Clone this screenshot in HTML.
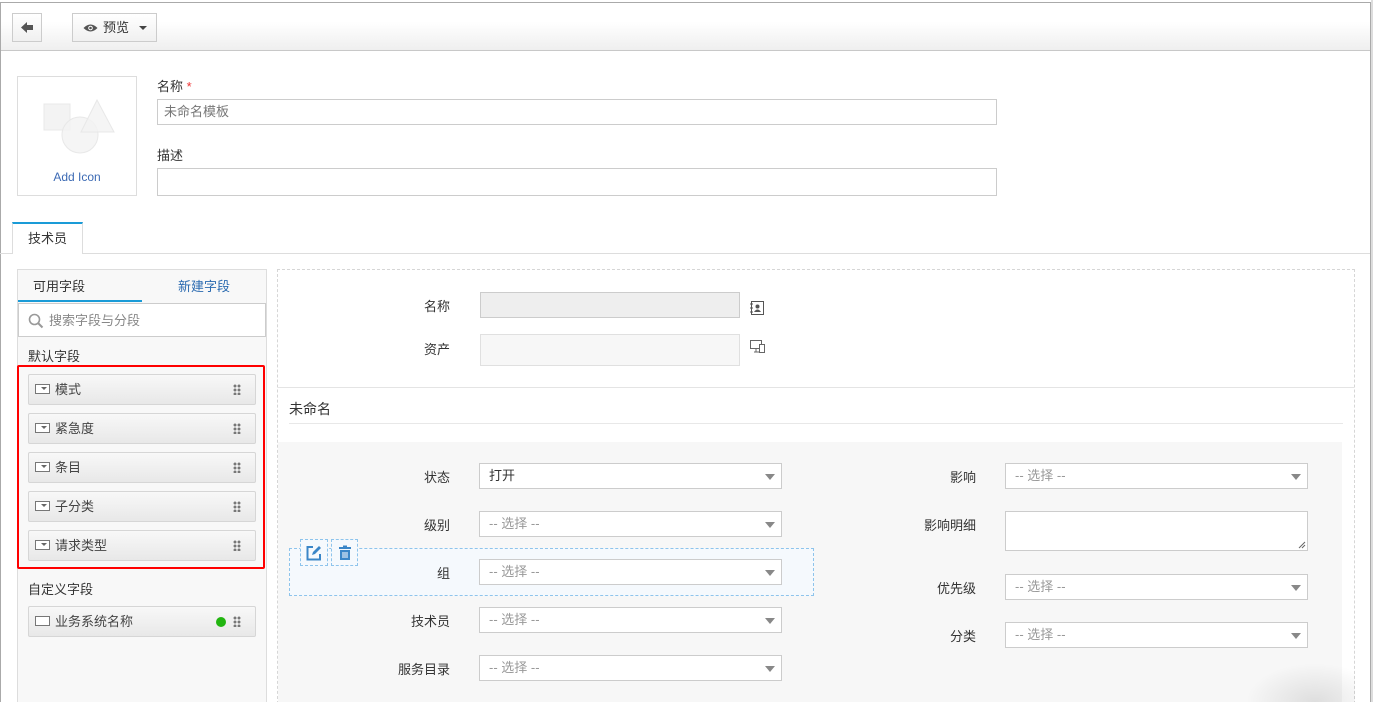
<!DOCTYPE html>
<html><head><meta charset="utf-8"><style>
*{box-sizing:border-box;margin:0;padding:0}
html,body{width:1373px;height:702px;overflow:hidden}
body{background:#fff;font-family:"Liberation Sans","Noto Sans CJK SC",sans-serif;font-size:13px;color:#333;position:relative}
.a{position:absolute}
.frame{left:0;top:2px;width:1371px;height:700px;border:1px solid #aaa;border-bottom:none}
.rgt{left:1371px;top:0;width:2px;height:702px;background:#ddd}
.tb{left:1px;top:3px;width:1369px;height:48px;background:linear-gradient(#fff 0%,#fff 40%,#efefef 100%);border-bottom:1px solid #c8c8c8}
.btn{border:1px solid #ccc;background:linear-gradient(#fff,#f0f0f0);height:29px}
.inp{border:1px solid #ccc;background:#fff}
.lbl{text-align:right;width:120px;font-size:13px}
.sel{border:1px solid #ccc;background:#fff;height:26px;width:303px;color:#999;padding-left:9px;line-height:24px;font-size:13px}
.sel:after{content:"";position:absolute;right:6px;top:10px;border:5px solid transparent;border-top:6px solid #888;border-bottom:0}
.item{left:28px;width:228px;height:31px;border:1px solid #d6d6d6;border-radius:2px;background:linear-gradient(#f8f8f8,#e8e8e8);line-height:29px;padding-left:26px;color:#444}
.item .ic{position:absolute;left:6px;top:9px;width:15px;height:10px;border:1.5px solid #777;background:#fff}
.item .ic.arr:after{content:"";position:absolute;left:5px;top:2px;border:3px solid transparent;border-top:3px solid #666;border-bottom:0}
.item .dr{position:absolute;right:14px;top:9px;width:8px;height:11px;background:radial-gradient(circle,#777 1.3px,transparent 1.6px) 0 0/4px 4px}
</style></head><body>
<div class="a frame"></div>
<div class="a rgt"></div>
<div class="a tb"></div>
<div class="a btn" style="left:12px;top:13px;width:30px"><svg width="28" height="27" viewBox="0 0 28 27"><path d="M8 13.5 L14 8 L14 11 L20 11 L20 16 L14 16 L14 19 Z" fill="#555"/></svg></div>
<div class="a btn" style="left:72px;top:13px;width:85px;line-height:27px;padding-left:30px;font-size:13px">预览
<svg class="a" style="left:10px;top:9px" width="15" height="10" viewBox="0 0 15 10"><path d="M0.5 5 Q7.5 -2 14.5 5 Q7.5 12 0.5 5Z" fill="#555"/><circle cx="7.5" cy="5" r="2.3" fill="#fff"/><circle cx="7.5" cy="5" r="1.3" fill="#555"/></svg>
<span class="a" style="left:66px;top:12px;border:4px solid transparent;border-top:4px solid #444;border-bottom:0"></span></div>

<div class="a" style="left:17px;top:76px;width:120px;height:120px;border:1px solid #ddd">
<svg class="a" style="left:25px;top:22px" width="72" height="56" viewBox="0 0 72 56"><rect x="1" y="5" width="26" height="26" fill="#f3f3f3" stroke="#e8e8e8"/><circle cx="37" cy="36" r="18" fill="#f3f3f3" stroke="#e8e8e8" fill-opacity=".8"/><path d="M54 1 L71 33 L38 33Z" fill="#f3f3f3" stroke="#e8e8e8" fill-opacity=".8"/></svg>
<div class="a" style="left:0;top:93px;width:118px;text-align:center;color:#3c6ab4;font-size:12px">Add Icon</div></div>
<div class="a" style="left:157px;top:76px">名称 <span style="color:#e33">*</span></div>
<div class="a inp" style="left:157px;top:99px;width:840px;height:26px;color:#777;padding-left:6px;line-height:24px">未命名模板</div>
<div class="a" style="left:157px;top:145px">描述</div>
<div class="a inp" style="left:157px;top:168px;width:840px;height:28px"></div>

<div class="a" style="left:0;top:253px;width:1370px;height:1px;background:#ddd"></div>
<div class="a" style="left:12px;top:222px;width:71px;height:32px;border:1px solid #ddd;border-top:2px solid #1a9bd7;border-bottom:none;background:#fff;text-align:center;line-height:30px">技术员</div>

<div class="a" style="left:17px;top:269px;width:250px;height:440px;background:#f8f8f8;border:1px solid #ddd"></div>
<div class="a" style="left:33px;top:276px">可用字段</div>
<div class="a" style="left:178px;top:276px;color:#2a6ab0">新建字段</div>
<div class="a" style="left:18px;top:300px;width:124px;height:2px;background:#1a9bd7"></div>
<div class="a inp" style="left:18px;top:303px;width:248px;height:34px;color:#888;padding-left:30px;line-height:33px">搜索字段与分段
<svg class="a" style="left:9px;top:9px" width="16" height="16" viewBox="0 0 16 16"><circle cx="6.5" cy="6.5" r="5" fill="none" stroke="#999" stroke-width="1.6"/><path d="M10 10 L14.5 14.5" stroke="#999" stroke-width="2"/></svg></div>
<div class="a" style="left:28px;top:346px">默认字段</div>
<div class="a" style="left:17px;top:365px;width:248px;height:204px;border:2px solid #f00;border-radius:2px"></div>
<div class="a item" style="top:374px"><i class="ic arr"></i>模式<i class="dr"></i></div>
<div class="a item" style="top:413px"><i class="ic arr"></i>紧急度<i class="dr"></i></div>
<div class="a item" style="top:452px"><i class="ic arr"></i>条目<i class="dr"></i></div>
<div class="a item" style="top:491px"><i class="ic arr"></i>子分类<i class="dr"></i></div>
<div class="a item" style="top:530px"><i class="ic arr"></i>请求类型<i class="dr"></i></div>
<div class="a" style="left:28px;top:579px">自定义字段</div>
<div class="a item" style="top:606px"><i class="ic"></i>业务系统名称<i class="dr"></i><span class="a" style="right:29px;top:10px;width:10px;height:10px;border-radius:50%;background:#22b510"></span></div>

<div class="a" style="left:277px;top:269px;width:1078px;height:440px;border:1px dashed #d6d6d6"></div>
<div class="a lbl" style="left:330px;top:296px">名称</div>
<div class="a" style="left:480px;top:292px;width:260px;height:26px;background:#eee;border:1px solid #ccc"></div>
<svg class="a" style="left:749px;top:300px" width="16" height="16" viewBox="0 0 16 16"><rect x="2.5" y="1.5" width="12" height="13" fill="#fff" stroke="#555"/><circle cx="8.5" cy="6.5" r="2" fill="#555"/><path d="M5 12 Q8.5 7 12 12Z" fill="#555"/><path d="M1 4h3M1 8h3M1 12h3" stroke="#555"/></svg>
<div class="a lbl" style="left:330px;top:339px">资产</div>
<div class="a" style="left:480px;top:334px;width:260px;height:32px;background:#f7f7f7;border:1px solid #e0e0e0"></div>
<svg class="a" style="left:750px;top:340px" width="16" height="14" viewBox="0 0 16 14"><rect x="0.5" y="0.5" width="11" height="8" fill="#fff" stroke="#666"/><path d="M4 12h5M6 9v3" stroke="#666"/><rect x="9.5" y="4.5" width="5" height="8" fill="#fff" stroke="#666"/></svg>
<div class="a" style="left:278px;top:387px;width:1076px;height:1px;background:#e4e4e4"></div>
<div class="a" style="left:289px;top:399px;font-size:14px">未命名</div>
<div class="a" style="left:289px;top:423px;width:1054px;height:1px;background:#e8e8e8"></div>
<div class="a" style="left:278px;top:442px;width:1064px;height:260px;background:#f7f7f7"></div>
<div class="a" style="left:289px;top:548px;width:525px;height:48px;border:1px dashed #8ec4ec;background:#f5f9fd"></div>
<div class="a" style="left:300px;top:539px;width:28px;height:27px;border:1px dashed #8ec4ec;background:#f5f9fd"><svg style="margin:5px 0 0 5px" width="16" height="16" viewBox="0 0 16 16"><path d="M7 2H1.5v12.5H14V9" fill="none" stroke="#3a86c8" stroke-width="2"/><path d="M6 10l1-3 6-6 2 2-6 6z" fill="#3a86c8"/></svg></div>
<div class="a" style="left:331px;top:539px;width:27px;height:27px;border:1px dashed #8ec4ec;background:#f5f9fd"><svg style="margin:5px 0 0 5px" width="16" height="16" viewBox="0 0 16 16"><path d="M2 3h12M6 1.5h4" stroke="#3a86c8" stroke-width="2"/><path d="M3 5h10v10H3z" fill="#3a86c8"/><path d="M6 7v6M8 7v6M10 7v6" stroke="#fff"/></svg></div>

<div class="a lbl" style="left:330px;top:467px">状态</div>
<div class="a sel" style="left:479px;top:463px;color:#333">打开</div>
<div class="a lbl" style="left:330px;top:515px">级别</div>
<div class="a sel" style="left:479px;top:511px">-- 选择 --</div>
<div class="a lbl" style="left:330px;top:563px">组</div>
<div class="a sel" style="left:479px;top:559px">-- 选择 --</div>
<div class="a lbl" style="left:330px;top:611px">技术员</div>
<div class="a sel" style="left:479px;top:607px">-- 选择 --</div>
<div class="a lbl" style="left:330px;top:659px">服务目录</div>
<div class="a sel" style="left:479px;top:655px">-- 选择 --</div>

<div class="a lbl" style="left:856px;top:467px">影响</div>
<div class="a sel" style="left:1005px;top:463px">-- 选择 --</div>
<div class="a lbl" style="left:856px;top:515px">影响明细</div>
<div class="a inp" style="left:1005px;top:511px;width:303px;height:40px"><svg class="a" style="right:1px;bottom:1px" width="8" height="8" viewBox="0 0 8 8"><path d="M7 1L1 7M7 4L4 7" stroke="#666"/></svg></div>
<div class="a lbl" style="left:856px;top:578px">优先级</div>
<div class="a sel" style="left:1005px;top:574px">-- 选择 --</div>
<div class="a lbl" style="left:856px;top:626px">分类</div>
<div class="a sel" style="left:1005px;top:622px">-- 选择 --</div>
<div class="a" style="left:1240px;top:660px;width:115px;height:42px;background:radial-gradient(ellipse at 65% 100%,rgba(0,0,0,.10),transparent 65%)"></div>
</body></html>
